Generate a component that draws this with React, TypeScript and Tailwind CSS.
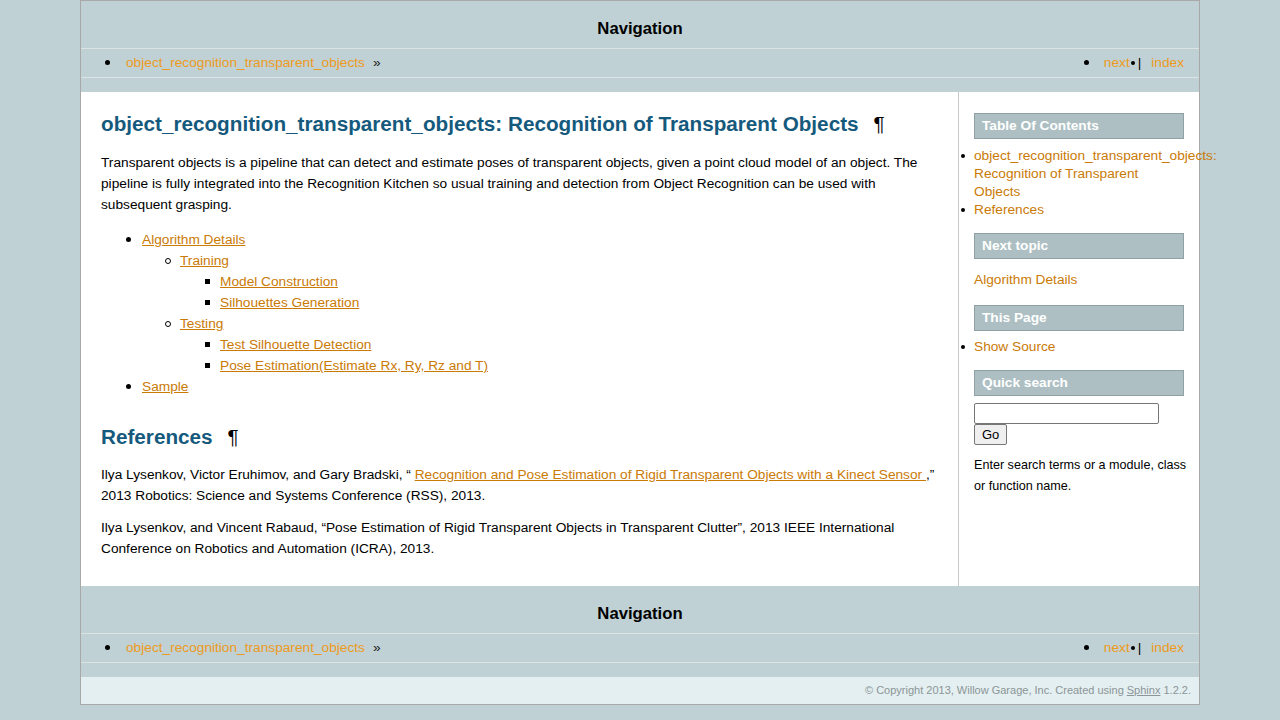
import React from "react";

const navLink = "text-[#ee9a1d] no-underline";
const docLink = "text-[#ca7a05] underline";

function Bullet({ kind = "disc" }: { kind?: "disc" | "circle" | "square" }) {
  if (kind === "circle")
    return <span className="inline-block w-[6px] h-[6px] rounded-full border border-black ml-[-1px] mr-[9px] align-middle" />;
  if (kind === "square")
    return <span className="inline-block w-[5px] h-[5px] bg-black ml-[-1px] mr-[10px] align-middle" />;
  return <span className="inline-block w-[5px] h-[5px] rounded-full bg-black mr-[11px] align-middle" />;
}

function NavBar() {
  return (
    <div className="bg-[#bfd1d4]">
      <h3 className="text-center font-bold text-[16.7px] text-black pt-[17px] pb-[8px] leading-[22px]">
        Navigation
      </h3>
      <div className="flex items-center justify-between h-[30px] border-t border-b border-[#dbe3e5] pl-[24px] pr-[15px] text-[13.7px]">
        <div className="flex items-center">
          <Bullet />
          <span className="w-[5px]" />
          <a className={navLink}>object_recognition_transparent_objects</a>
          <span className="ml-[8px] text-[#222]">»</span>
        </div>
        <div className="flex items-center">
          <span className="inline-block w-[5px] h-[5px] rounded-full bg-black mr-[15px]" />
          <a className={navLink}>next</a>
          <span className="inline-block w-[4px] h-[4px] rounded-full bg-black ml-[1px]" />
          <span className="text-black ml-[3px]">|</span>
          <a className={`${navLink} ml-[10px]`}>index</a>
        </div>
      </div>
      <div className="h-[14px]" />
    </div>
  );
}

function SideHead({ children }: { children: React.ReactNode }) {
  return (
    <div className="bg-[#adbfc3] border border-[#8fa1a5] text-white font-bold text-[13.7px] h-[26px] leading-[24px] px-[7px] w-[210px]">
      {children}
    </div>
  );
}

function Sidebar() {
  return (
    <div className="w-[241px] border-l border-[#c8c8c8] pl-[15px] pt-[21px] text-[13.7px] overflow-visible">
      <SideHead>Table Of Contents</SideHead>
      <ul className="mt-[8px] leading-[18px] w-[190px]">
        <li className="relative">
          <span className="absolute left-[-13px] top-[7px] w-[4px] h-[4px] rounded-full bg-black" />
          <a className="text-[#ca7a05] whitespace-normal">
            <span className="whitespace-nowrap">object_recognition_transparent_objects:</span> Recognition of Transparent Objects
          </a>
        </li>
        <li className="relative">
          <span className="absolute left-[-13px] top-[7px] w-[4px] h-[4px] rounded-full bg-black" />
          <a className="text-[#ca7a05]">References</a>
        </li>
      </ul>
      <div className="mt-[14px]">
        <SideHead>Next topic</SideHead>
      </div>
      <p className="mt-[11px] leading-[20px]">
        <a className="text-[#ca7a05]">Algorithm Details</a>
      </p>
      <div className="mt-[15px]">
        <SideHead>This Page</SideHead>
      </div>
      <ul className="mt-[7px] leading-[18px]">
        <li className="relative">
          <span className="absolute left-[-13px] top-[7px] w-[4px] h-[4px] rounded-full bg-black" />
          <a className="text-[#ca7a05]">Show Source</a>
        </li>
      </ul>
      <div className="mt-[14px]">
        <SideHead>Quick search</SideHead>
      </div>
      <div className="mt-[7px]">
        <input type="text" className="block w-[185px] h-[21px] border border-[#767676] rounded-[2px] bg-white" />
        <button className="block h-[21px] px-[7px] text-[13px] border border-[#767676] rounded-[2px] bg-[#efefef] text-black leading-[19px]">
          Go
        </button>
      </div>
      <p className="mt-[10px] text-[12.6px] leading-[21px] text-black w-[215px]">
        Enter search terms or a module, class or function name.
      </p>
    </div>
  );
}

function Content() {
  return (
    <div className="flex-1 px-[20px] pt-[18px] pb-[27px] text-[13.7px] leading-[21px] text-black">
      <h1 className="text-[20.7px] font-bold text-[#155a7d] leading-[28px] mb-[14px]">
        object_recognition_transparent_objects: Recognition of Transparent Objects
        <span className="ml-[15px] text-black font-normal">¶</span>
      </h1>
      <p>
        Transparent objects is a pipeline that can detect and estimate poses of transparent objects, given a point cloud model of an object. The pipeline is fully integrated into the Recognition Kitchen so usual training and detection from Object Recognition can be used with subsequent grasping.
      </p>
      <ul className="mt-[14px] pl-[25px]">
        <li className="flex items-center"><Bullet /><a className={docLink}>Algorithm Details</a></li>
        <li className="pl-[40px] flex items-center"><Bullet kind="circle" /><a className={docLink}>Training</a></li>
        <li className="pl-[80px] flex items-center"><Bullet kind="square" /><a className={docLink}>Model Construction</a></li>
        <li className="pl-[80px] flex items-center"><Bullet kind="square" /><a className={docLink}>Silhouettes Generation</a></li>
        <li className="pl-[40px] flex items-center"><Bullet kind="circle" /><a className={docLink}>Testing</a></li>
        <li className="pl-[80px] flex items-center"><Bullet kind="square" /><a className={docLink}>Test Silhouette Detection</a></li>
        <li className="pl-[80px] flex items-center"><Bullet kind="square" /><a className={docLink}>Pose Estimation(Estimate Rx, Ry, Rz and T)</a></li>
        <li className="flex items-center"><Bullet /><a className={docLink}>Sample</a></li>
      </ul>
      <h2 className="text-[20.7px] font-bold text-[#155a7d] leading-[28px] mt-[26px] mb-[13px]">
        References
        <span className="ml-[15px] text-black font-normal">¶</span>
      </h2>
      <p>
        Ilya Lysenkov, Victor Eruhimov, and Gary Bradski, “ <a className={docLink}>Recognition and Pose Estimation of Rigid Transparent Objects with a Kinect Sensor </a>,” 2013 Robotics: Science and Systems Conference (RSS), 2013.
      </p>
      <p className="mt-[11px]">
        Ilya Lysenkov, and Vincent Rabaud, “Pose Estimation of Rigid Transparent Objects in Transparent Clutter”, 2013 IEEE International Conference on Robotics and Automation (ICRA), 2013.
      </p>
    </div>
  );
}

export default function App() {
  return (
    <div className="min-h-[720px] bg-[#bfd1d4] font-['Liberation_Sans',Arial,sans-serif]">
      <div className="w-[1120px] mx-auto border border-[#a8a8a8] bg-[#bfd1d4]">
        <NavBar />
        <div className="flex bg-white">
          <Content />
          <Sidebar />
        </div>
        <NavBar />
        <div className="bg-[#e3eff0] h-[27px] flex items-center justify-end pr-[8px] text-[11px] text-[#8c9597]">
          © Copyright 2013, Willow Garage, Inc. Created using <a className="underline ml-[3px]">Sphinx </a>&nbsp;1.2.2.
        </div>
      </div>
    </div>
  );
}
